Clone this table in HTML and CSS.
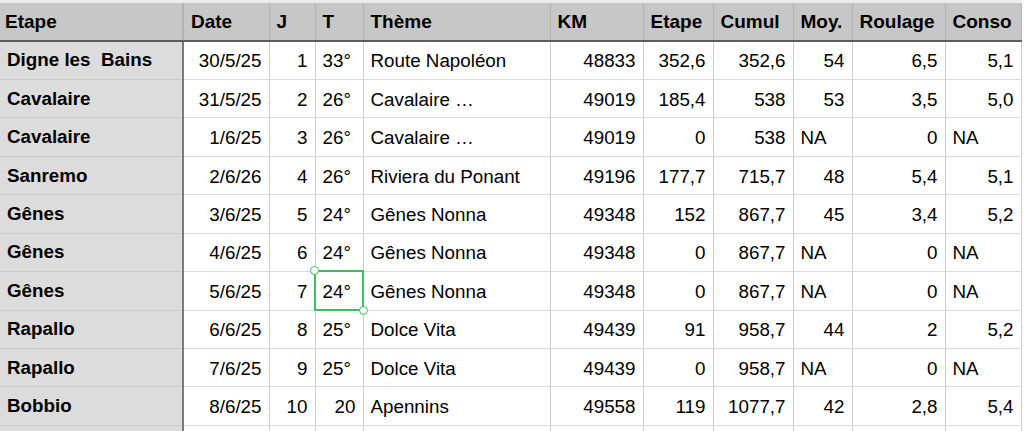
FILE: index.html
```html
<!DOCTYPE html>
<html lang="fr">
<head>
<meta charset="utf-8">
<title>Etapes</title>
<link rel="stylesheet" href="styles.css">
</head>
<body>
<div class="sheet">
<table class="grid">
  <colgroup>
    <col class="c1"><col class="c2"><col class="c3"><col class="c4"><col class="c5"><col class="c6"><col class="c7"><col class="c8"><col class="c9"><col class="c10"><col class="c11">
  </colgroup>
  <thead>
    <tr>
      <th class="hl first">Etape</th>
      <th class="hl">Date</th>
      <th class="hl">J</th>
      <th class="hl">T</th>
      <th class="hl">Thème</th>
      <th class="hl">KM</th>
      <th class="hl">Etape</th>
      <th class="hl">Cumul</th>
      <th class="hl">Moy.</th>
      <th class="hl">Roulage</th>
      <th class="hl">Conso</th>
    </tr>
  </thead>
  <tbody>
    <tr><th class="rh">Digne les  Bains</th><td class="r">30/5/25</td><td class="r">1</td><td class="l">33°</td><td class="l">Route Napoléon</td><td class="r">48833</td><td class="r">352,6</td><td class="r">352,6</td><td class="r">54</td><td class="r">6,5</td><td class="r">5,1</td></tr>
    <tr><th class="rh">Cavalaire</th><td class="r">31/5/25</td><td class="r">2</td><td class="l">26°</td><td class="l">Cavalaire …</td><td class="r">49019</td><td class="r">185,4</td><td class="r">538</td><td class="r">53</td><td class="r">3,5</td><td class="r">5,0</td></tr>
    <tr><th class="rh">Cavalaire</th><td class="r">1/6/25</td><td class="r">3</td><td class="l">26°</td><td class="l">Cavalaire …</td><td class="r">49019</td><td class="r">0</td><td class="r">538</td><td class="l">NA</td><td class="r">0</td><td class="l">NA</td></tr>
    <tr><th class="rh">Sanremo</th><td class="r">2/6/26</td><td class="r">4</td><td class="l">26°</td><td class="l">Riviera du Ponant</td><td class="r">49196</td><td class="r">177,7</td><td class="r">715,7</td><td class="r">48</td><td class="r">5,4</td><td class="r">5,1</td></tr>
    <tr><th class="rh">Gênes</th><td class="r">3/6/25</td><td class="r">5</td><td class="l">24°</td><td class="l">Gênes Nonna</td><td class="r">49348</td><td class="r">152</td><td class="r">867,7</td><td class="r">45</td><td class="r">3,4</td><td class="r">5,2</td></tr>
    <tr><th class="rh">Gênes</th><td class="r">4/6/25</td><td class="r">6</td><td class="l">24°</td><td class="l">Gênes Nonna</td><td class="r">49348</td><td class="r">0</td><td class="r">867,7</td><td class="l">NA</td><td class="r">0</td><td class="l">NA</td></tr>
    <tr><th class="rh">Gênes</th><td class="r">5/6/25</td><td class="r">7</td><td class="l sel">24°<span class="selbox"><span class="knob tl"></span><span class="knob br"></span></span></td><td class="l">Gênes Nonna</td><td class="r">49348</td><td class="r">0</td><td class="r">867,7</td><td class="l">NA</td><td class="r">0</td><td class="l">NA</td></tr>
    <tr><th class="rh">Rapallo</th><td class="r">6/6/25</td><td class="r">8</td><td class="l">25°</td><td class="l">Dolce Vita</td><td class="r">49439</td><td class="r">91</td><td class="r">958,7</td><td class="r">44</td><td class="r">2</td><td class="r">5,2</td></tr>
    <tr><th class="rh">Rapallo</th><td class="r">7/6/25</td><td class="r">9</td><td class="l">25°</td><td class="l">Dolce Vita</td><td class="r">49439</td><td class="r">0</td><td class="r">958,7</td><td class="l">NA</td><td class="r">0</td><td class="l">NA</td></tr>
    <tr><th class="rh">Bobbio</th><td class="r">8/6/25</td><td class="r">10</td><td class="r">20</td><td class="l">Apennins</td><td class="r">49558</td><td class="r">119</td><td class="r">1077,7</td><td class="r">42</td><td class="r">2,8</td><td class="r">5,4</td></tr>
    <tr><th class="rh"></th><td></td><td></td><td></td><td></td><td></td><td></td><td></td><td></td><td></td><td></td></tr>
  </tbody>
</table>
</div>
</body>
</html>
```

FILE: styles.css
```css
html, body {
  margin: 0;
  padding: 0;
  background: #ffffff;
  overflow: hidden;
}

.sheet {
  width: 1024px;
  height: 431px;
  overflow: hidden;
  padding-top: 3px;
  box-sizing: border-box;
  background: linear-gradient(#ececec, #ececec) top left / 1021px 3px no-repeat, #ffffff;
  font-family: "Liberation Sans", Arial, Helvetica, sans-serif;
  font-size: 18.8px;
  color: #000000;
}

.grid {
  border-collapse: collapse;
  table-layout: fixed;
  width: 1021px;
}

.c1 { width: 183px; }
.c2 { width: 86px; }
.c3 { width: 46px; }
.c4 { width: 48px; }
.c5 { width: 187px; }
.c6 { width: 93px; }
.c7 { width: 70px; }
.c8 { width: 80px; }
.c9 { width: 59px; }
.c10 { width: 93px; }
.c11 { width: 76px; }

.grid th,
.grid td {
  padding: 0 7px;
  white-space: pre;
  overflow: hidden;
  box-sizing: border-box;
  line-height: 20px;
}

.grid thead tr { height: 38px; }
.grid tbody tr { height: 38.45px; }

.hl {
  background: #c6c7c6;
  font-weight: bold;
  font-size: 19px;
  text-align: left;
  border-left: 1px solid #b3b3b3;
  border-right: 1px solid #b3b3b3;
  border-bottom: 2px solid #5e5e5e;
  padding-top: 2px;
}

.hl.first {
  border-left: none;
  border-right: 2px solid #b3b3b3;
  padding-left: 5px;
}

.rh {
  background: #dcdcdc;
  font-weight: bold;
  text-align: left;
  padding-left: 5px;
  padding-top: 2px;
  border-right: 2px solid #7a7a7a;
  border-bottom: 1px solid #c9c9c9;
}

.grid td {
  border-left: 1px solid #cdcdcd;
  border-right: 1px solid #cdcdcd;
  border-bottom: 1px solid #dadada;
  background: #ffffff;
  padding-top: 2px;
}

.r { text-align: right; }
.l { text-align: left; }

.grid td.sel {
  position: relative;
  overflow: visible;
}

.selbox {
  position: absolute;
  left: -2px;
  top: -2px;
  right: -1px;
  bottom: -1px;
  border: 2px solid #3fbd5e;
  pointer-events: none;
  z-index: 2;
}

.knob {
  position: absolute;
  width: 7px;
  height: 7px;
  border-radius: 50%;
  border: 1.5px solid #3fbd5e;
  background: #ffffff;
}

.knob.tl { left: -6px; top: -6px; }
.knob.br { right: -6px; bottom: -6px; }
```
